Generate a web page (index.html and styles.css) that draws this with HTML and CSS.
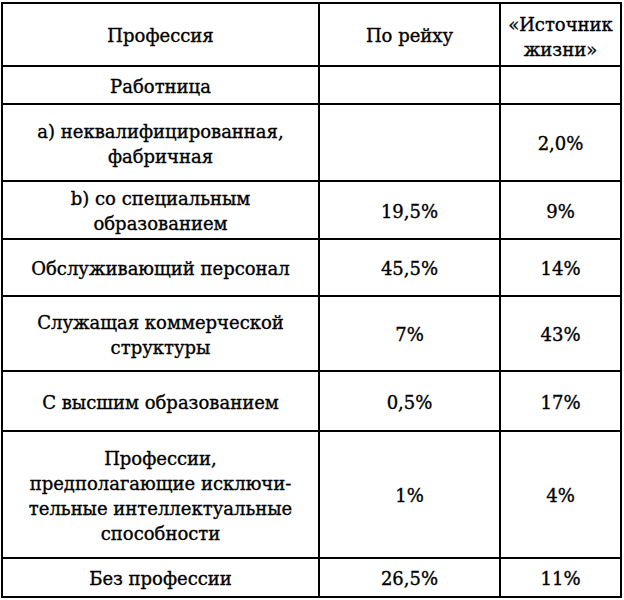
FILE: index.html
```html
<!DOCTYPE html>
<html lang="ru">
<head>
<meta charset="utf-8">
<link rel="stylesheet" href="styles.css">
</head>
<body>
<div class="table">
  <div class="cell r1">Профессия</div>
  <div class="cell r1">По рейху</div>
  <div class="cell r1 narrow">«Источник жизни»</div>

  <div class="cell r2">Работница</div>
  <div class="cell r2"></div>
  <div class="cell r2"></div>

  <div class="cell r3">а) неквалифицированная,<br>фабричная</div>
  <div class="cell r3"></div>
  <div class="cell r3">2,0%</div>

  <div class="cell r4">b) со специальным<br>образованием</div>
  <div class="cell r4">19,5%</div>
  <div class="cell r4">9%</div>

  <div class="cell r5">Обслуживающий персонал</div>
  <div class="cell r5">45,5%</div>
  <div class="cell r5">14%</div>

  <div class="cell r6">Служащая коммерческой<br>структуры</div>
  <div class="cell r6">7%</div>
  <div class="cell r6">43%</div>

  <div class="cell r7">С высшим образованием</div>
  <div class="cell r7">0,5%</div>
  <div class="cell r7">17%</div>

  <div class="cell r8">Профессии,<br>предполагающие исключи-<br>тельные интеллектуальные<br>способности</div>
  <div class="cell r8">1%</div>
  <div class="cell r8">4%</div>

  <div class="cell r9">Без профессии</div>
  <div class="cell r9">26,5%</div>
  <div class="cell r9">11%</div>
</div>
</body>
</html>
```

FILE: styles.css
```css
html, body {
  margin: 0;
  padding: 0;
  background: #ffffff;
}

body {
  padding: 2px 0 0 1px;
  font-family: "DejaVu Serif", "Liberation Serif", serif;
  color: #000000;
}

.table {
  display: grid;
  grid-template-columns: 317px 181px 121px;
  grid-template-rows: 63px 38px 77px 58px 57px 75px 60px 127px 39px;
  width: 621px;
  box-sizing: border-box;
  border-left: 2px solid #000;
  border-top: 2px solid #000;
}

.cell {
  box-sizing: border-box;
  border-right: 2px solid #000;
  border-bottom: 2px solid #000;
  display: flex;
  align-items: center;
  justify-content: center;
  text-align: center;
  font-size: 18px;
  line-height: 25px;
  padding: 2px 4px 0;
  -webkit-text-stroke: 0.35px #000;
}

.narrow {
  padding: 0;
  align-items: flex-start;
  padding-top: 8px;
}
```
